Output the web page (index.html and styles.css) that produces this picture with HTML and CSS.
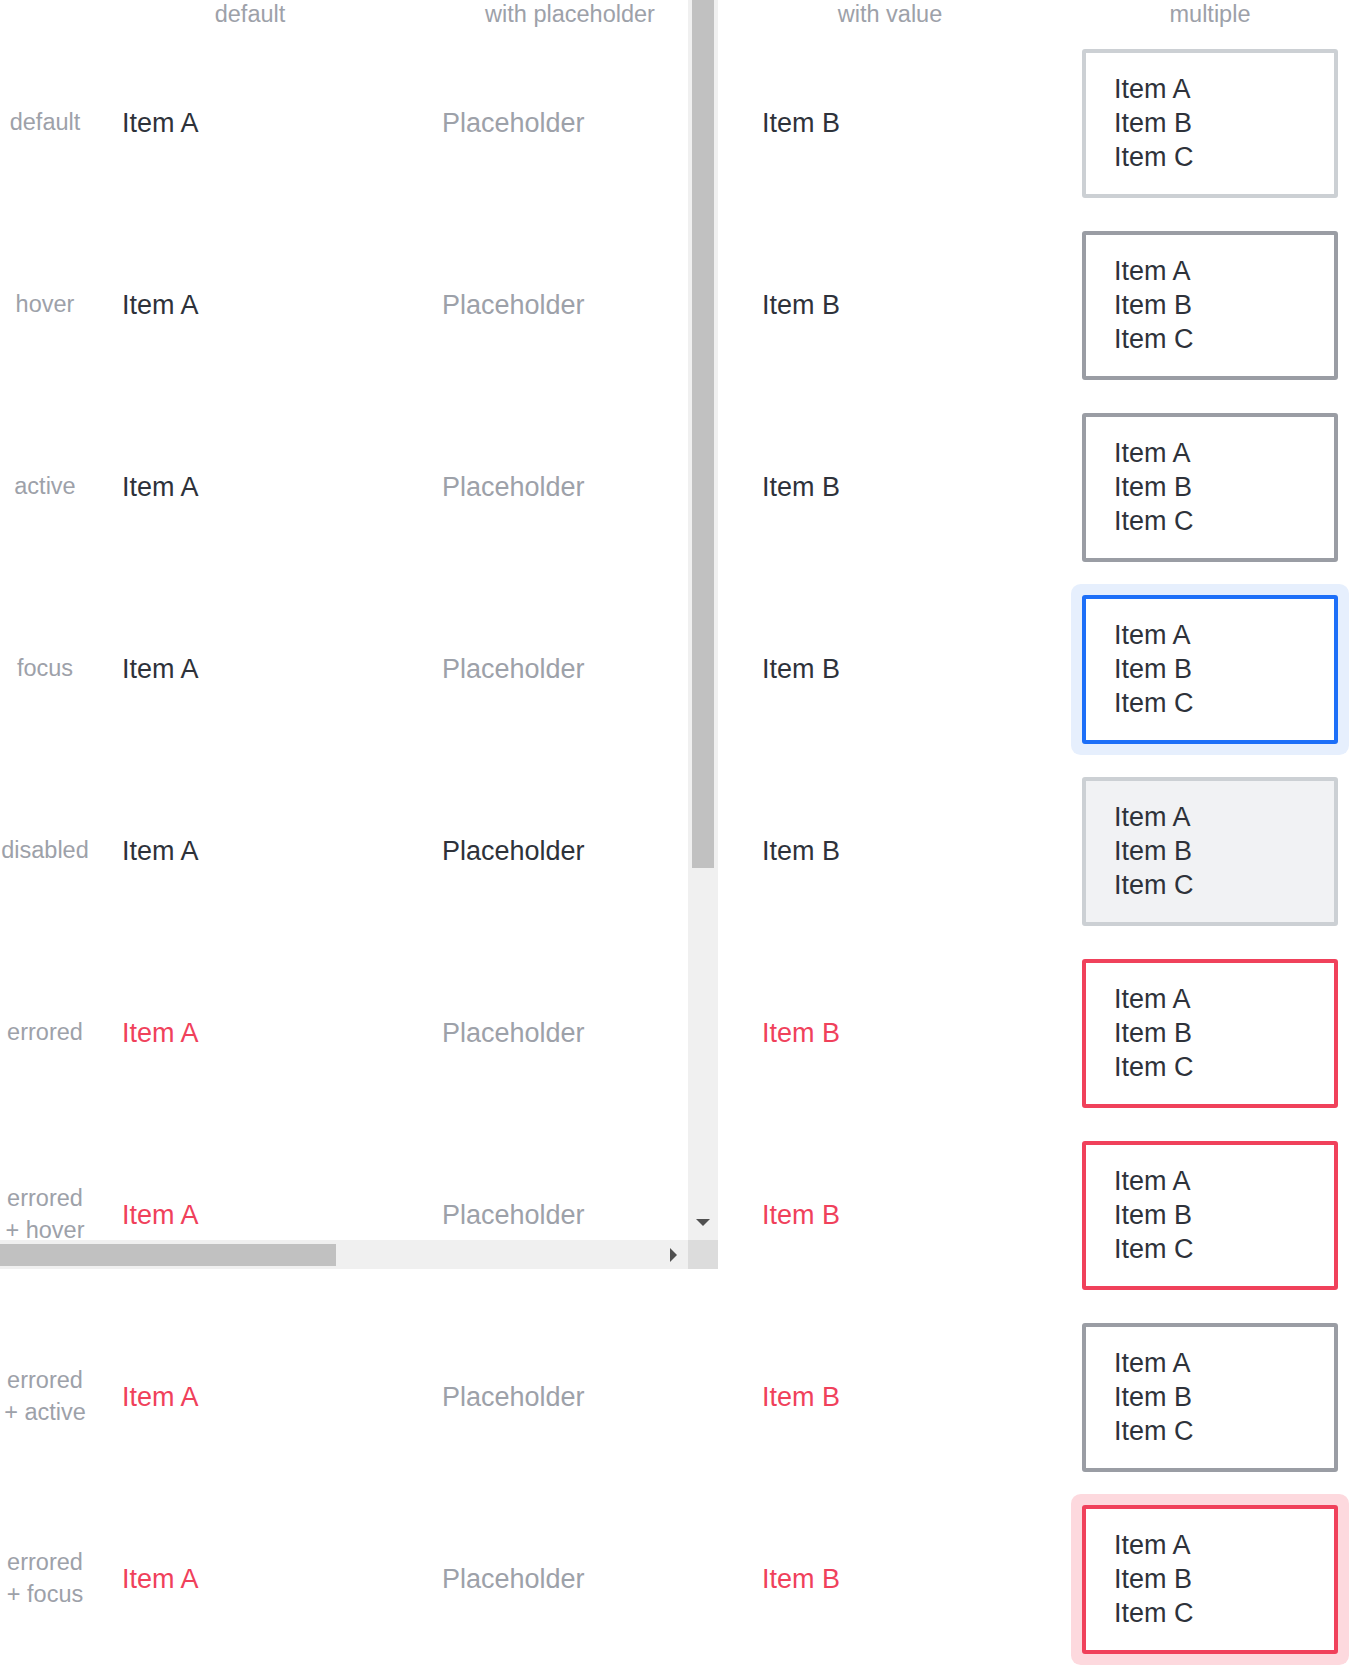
FILE: index.html
```html
<!DOCTYPE html>
<html>
<head>
<meta charset="utf-8">
<link rel="stylesheet" href="styles.css">
</head>
<body>
<div class="page">
  <div class="grid">
    <div class="head"></div>
    <div class="head">default</div>
    <div class="head">with placeholder</div>
    <div class="head">with value</div>
    <div class="head">multiple</div>

    <div class="label">default</div>
    <div class="cell"><span class="val">Item A</span></div>
    <div class="cell"><span class="ph">Placeholder</span></div>
    <div class="cell"><span class="val">Item B</span></div>
    <div class="mcell"><div class="box"><div>Item A</div><div>Item B</div><div>Item C</div></div></div>

    <div class="label">hover</div>
    <div class="cell"><span class="val">Item A</span></div>
    <div class="cell"><span class="ph">Placeholder</span></div>
    <div class="cell"><span class="val">Item B</span></div>
    <div class="mcell"><div class="box box-dark"><div>Item A</div><div>Item B</div><div>Item C</div></div></div>

    <div class="label">active</div>
    <div class="cell"><span class="val">Item A</span></div>
    <div class="cell"><span class="ph">Placeholder</span></div>
    <div class="cell"><span class="val">Item B</span></div>
    <div class="mcell"><div class="box box-dark"><div>Item A</div><div>Item B</div><div>Item C</div></div></div>

    <div class="label">focus</div>
    <div class="cell"><span class="val">Item A</span></div>
    <div class="cell"><span class="ph">Placeholder</span></div>
    <div class="cell"><span class="val">Item B</span></div>
    <div class="mcell"><div class="box box-focus"><div>Item A</div><div>Item B</div><div>Item C</div></div></div>

    <div class="label">disabled</div>
    <div class="cell"><span class="val">Item A</span></div>
    <div class="cell"><span class="val">Placeholder</span></div>
    <div class="cell"><span class="val">Item B</span></div>
    <div class="mcell"><div class="box box-disabled"><div>Item A</div><div>Item B</div><div>Item C</div></div></div>

    <div class="label">errored</div>
    <div class="cell"><span class="err">Item A</span></div>
    <div class="cell"><span class="ph">Placeholder</span></div>
    <div class="cell"><span class="err">Item B</span></div>
    <div class="mcell"><div class="box box-err"><div>Item A</div><div>Item B</div><div>Item C</div></div></div>

    <div class="label">errored<br>+ hover</div>
    <div class="cell"><span class="err">Item A</span></div>
    <div class="cell"><span class="ph">Placeholder</span></div>
    <div class="cell"><span class="err">Item B</span></div>
    <div class="mcell"><div class="box box-err"><div>Item A</div><div>Item B</div><div>Item C</div></div></div>

    <div class="label">errored<br>+ active</div>
    <div class="cell"><span class="err">Item A</span></div>
    <div class="cell"><span class="ph">Placeholder</span></div>
    <div class="cell"><span class="err">Item B</span></div>
    <div class="mcell"><div class="box box-dark"><div>Item A</div><div>Item B</div><div>Item C</div></div></div>

    <div class="label">errored<br>+ focus</div>
    <div class="cell"><span class="err">Item A</span></div>
    <div class="cell"><span class="ph">Placeholder</span></div>
    <div class="cell"><span class="err">Item B</span></div>
    <div class="mcell"><div class="box box-err-focus"><div>Item A</div><div>Item B</div><div>Item C</div></div></div>
  </div>

  <div class="vscroll">
    <div class="vthumb"></div>
    <div class="arrow-down"></div>
  </div>
  <div class="hscroll">
    <div class="hthumb"></div>
    <div class="arrow-right"></div>
  </div>
  <div class="corner"></div>
</div>
</body>
</html>
```

FILE: styles.css
```css
html, body {
  margin: 0;
  padding: 0;
  background: #ffffff;
}
body {
  font-family: "Liberation Sans", Arial, Helvetica, sans-serif;
  color: #2c3038;
}
.page {
  position: relative;
  width: 1370px;
  height: 1670px;
  overflow: hidden;
}
.grid {
  display: grid;
  grid-template-columns: 90px repeat(4, 320px);
  grid-template-rows: 32px repeat(9, 182px);
}
.head {
  font-size: 23.5px;
  line-height: 28px;
  color: #9da1a9;
  text-align: center;
}
.label {
  display: flex;
  align-items: center;
  justify-content: center;
  text-align: center;
  font-size: 23.5px;
  line-height: 32px;
  color: #9da1a9;
  padding-bottom: 3px;
}
.cell {
  display: flex;
  align-items: center;
  padding-left: 32px;
  font-size: 27px;
}
.val { color: #2e323a; }
.ph { color: #9da1a9; }
.err { color: #f0415b; }
.mcell {
  display: flex;
  align-items: center;
  justify-content: center;
}
.box {
  box-sizing: border-box;
  width: 256px;
  height: 149px;
  border: 4px solid #ccd0d4;
  border-radius: 3px;
  padding-left: 28px;
  display: flex;
  flex-direction: column;
  justify-content: center;
  font-size: 27px;
  line-height: 34px;
  color: #2e323a;
  background: #ffffff;
}
.box-dark { border-color: #9a9da4; }
.box-focus {
  border-color: #1d6ff8;
  box-shadow: 0 0 0 11px #e6effd;
}
.box-disabled {
  background: #f1f2f4;
  border-color: #ccd0d4;
}
.box-err { border-color: #f0415b; }
.box-err-focus {
  border-color: #f0415b;
  box-shadow: 0 0 0 11px #fdd9de;
}
.vscroll {
  position: absolute;
  left: 688px;
  top: 0;
  width: 30px;
  height: 1240px;
  background: #f0f0f0;
}
.vthumb {
  position: absolute;
  left: 4px;
  top: 0;
  width: 22px;
  height: 868px;
  background: #c1c1c1;
}
.arrow-down {
  position: absolute;
  left: 8px;
  top: 1219px;
  width: 0;
  height: 0;
  border-left: 7px solid transparent;
  border-right: 7px solid transparent;
  border-top: 7px solid #505050;
}
.hscroll {
  position: absolute;
  left: 0;
  top: 1240px;
  width: 688px;
  height: 29px;
  background: #f0f0f0;
}
.hthumb {
  position: absolute;
  left: 0;
  top: 4px;
  width: 336px;
  height: 22px;
  background: #c1c1c1;
}
.arrow-right {
  position: absolute;
  left: 670px;
  top: 8px;
  width: 0;
  height: 0;
  border-top: 7px solid transparent;
  border-bottom: 7px solid transparent;
  border-left: 7px solid #505050;
}
.corner {
  position: absolute;
  left: 688px;
  top: 1240px;
  width: 30px;
  height: 29px;
  background: #dcdcdc;
}
```
